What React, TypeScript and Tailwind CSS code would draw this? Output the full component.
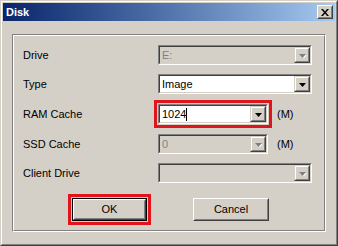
import React from "react";

const font = { fontFamily: '"Liberation Sans", Arial, sans-serif' };

function Arrow({ disabled }: { disabled?: boolean }) {
  return (
    <div className="w-[16px] h-[16px] border border-t-[#d4d0c8] border-l-[#d4d0c8] border-r-[#404040] border-b-[#404040]">
      <div className="w-full h-full bg-[#d4d0c8] border border-t-white border-l-white border-r-[#808080] border-b-[#808080] flex items-center justify-center">
        <svg width="7" height="4" viewBox="0 0 7 4" className="mt-[1px]">
          {disabled && <polygon points="1,1 8,1 4.5,4.5" fill="#ffffff" />}
          <polygon points="0,0 7,0 3.5,4" fill={disabled ? "#808080" : "#000000"} />
        </svg>
      </div>
    </div>
  );
}

function Combo({
  width,
  value,
  disabled,
  cursor,
}: {
  width: number;
  value?: string;
  disabled?: boolean;
  cursor?: boolean;
}) {
  return (
    <div
      className="h-[20px] border border-t-[#808080] border-l-[#808080] border-r-white border-b-white"
      style={{ width }}
    >
      <div
        className={`h-full border border-t-[#404040] border-l-[#404040] border-r-[#d4d0c8] border-b-[#d4d0c8] flex items-center ${
          disabled ? "bg-[#d4d0c8]" : "bg-white"
        }`}
      >
        <div
          className={`flex-1 pl-[2px] text-[11px] leading-none flex items-center ${
            disabled ? "text-[#808080]" : "text-black"
          }`}
        >
          <span>{value}</span>
          {cursor && <span className="inline-block w-[1px] h-[13px] bg-black" />}
        </div>
        <Arrow disabled={disabled} />
      </div>
    </div>
  );
}

function Row({
  label,
  children,
  mt,
}: {
  label: string;
  children: React.ReactNode;
  mt: string;
}) {
  return (
    <div className={`flex items-center h-[20px] ${mt}`}>
      <div className="w-[135px] text-[11px] text-black leading-none">{label}</div>
      {children}
    </div>
  );
}

function Button({ label, def }: { label: string; def?: boolean }) {
  const inner = (
    <div className="w-full h-full border border-t-white border-l-white border-r-[#404040] border-b-[#404040]">
      <div className="w-full h-full border border-t-[#d4d0c8] border-l-[#d4d0c8] border-r-[#808080] border-b-[#808080] bg-[#d4d0c8] flex items-center justify-center text-[11px] text-black leading-none">
        {label}
      </div>
    </div>
  );
  if (def) {
    return (
      <div className="w-[75px] h-[23px] border border-black outline-3 outline-[#e0141b] outline-offset-1">
        {inner}
      </div>
    );
  }
  return <div className="w-[76px] h-[23px]">{inner}</div>;
}

export default function App() {
  return (
    <div style={font} className="w-[338px] h-[246px] select-none">
      <div className="w-full h-full border border-t-[#d4d0c8] border-l-[#d4d0c8] border-r-[#404040] border-b-[#404040]">
        <div className="w-full h-full border border-t-white border-l-white border-r-[#808080] border-b-[#808080] bg-[#d4d0c8] p-[1px] flex flex-col">
          {/* title bar */}
          <div className="h-[18px] bg-gradient-to-r from-[#0a246a] to-[#a6caf0] flex items-center pl-[3px] pr-[2px]">
            <div className="flex-1 text-white font-bold text-[11px] leading-none">Disk</div>
            <div className="w-[16px] h-[14px] border border-t-white border-l-white border-r-[#404040] border-b-[#404040]">
              <div className="w-full h-full bg-[#d4d0c8] border border-t-[#d4d0c8] border-l-[#d4d0c8] border-r-[#808080] border-b-[#808080] flex items-center justify-center">
                <svg width="8" height="7" viewBox="0 0 8 7">
                  <path d="M0 0h2l2 2.5L6 0h2L5 3.5 8 7H6L4 4.5 2 7H0l3-3.5z" fill="#000" />
                </svg>
              </div>
            </div>
          </div>
          {/* group box */}
          <div className="mt-[13px] ml-[9px] mr-[9px] h-[198px] border border-t-[#808080] border-l-[#808080] border-r-white border-b-white">
            <div className="w-full h-full border border-t-white border-l-white border-r-[#808080] border-b-[#808080] pt-[9px] pl-[9px] pr-[11px] flex flex-col">
              <Row label="Drive" mt="mt-0">
                <Combo width={154} value="E:" disabled />
              </Row>
              <Row label="Type" mt="mt-[9px]">
                <Combo width={154} value="Image" />
              </Row>
              <Row label="RAM Cache" mt="mt-[10px]">
                <div className="outline-3 outline-[#e0141b] outline-offset-1">
                  <Combo width={110} value="1024" cursor />
                </div>
                <span className="ml-[9px] text-[11px] leading-none text-black">(M)</span>
              </Row>
              <Row label="SSD Cache" mt="mt-[10px]">
                <Combo width={110} value="0" disabled />
                <span className="ml-[9px] text-[11px] leading-none text-black">(M)</span>
              </Row>
              <Row label="Client Drive" mt="mt-[9px]">
                <Combo width={154} value="" disabled />
              </Row>
              <div className="flex mt-[15px] pl-[49px] gap-[46px]">
                <Button label="OK" def />
                <Button label="Cancel" />
              </div>
            </div>
          </div>
        </div>
      </div>
    </div>
  );
}
